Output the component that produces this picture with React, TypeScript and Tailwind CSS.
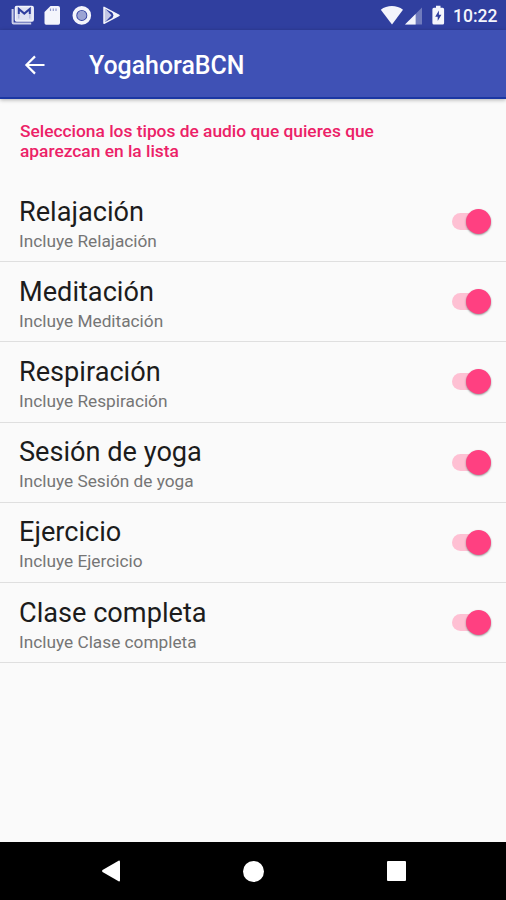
import React from 'react';

interface AudioType {
  name: string;
  summary: string;
}

const audioTypes: AudioType[] = [
  { name: 'Relajación', summary: 'Incluye Relajación' },
  { name: 'Meditación', summary: 'Incluye Meditación' },
  { name: 'Respiración', summary: 'Incluye Respiración' },
  { name: 'Sesión de yoga', summary: 'Incluye Sesión de yoga' },
  { name: 'Ejercicio', summary: 'Incluye Ejercicio' },
  { name: 'Clase completa', summary: 'Incluye Clase completa' },
];

const StatusBar: React.FC = () => (
  <div className="flex h-[30px] shrink-0 items-center justify-between bg-[#303f9f] pl-[10px] pr-[9px] text-[#f4f5fc]">
    <svg className="h-[30px] w-[112px]" viewBox="10 0 112 30" fill="none">
      {/* mail */}
      <path d="M12.6 9v13.5a1 1 0 0 0 1 1h17.600" stroke="currentColor" strokeWidth="2" strokeOpacity="0.8" />
      <rect x="15.400" y="6.500" width="17.800" height="14.500" rx="1.200" fill="#dfe2f3" stroke="currentColor" strokeWidth="1.400" />
      <path d="M18.800 14V9l5.500 4.600L29.800 9v5" stroke="#303f9f" strokeWidth="2" />
      <path d="M18.800 14v4.500M29.800 14v4.500" stroke="#aab1db" strokeWidth="1" />
      {/* sd card */}
      <path d="M50.500 6H58a2 2 0 0 1 2 2v15a1.700 1.700 0 0 1-1.700 1.700H46.200a1.700 1.700 0 0 1-1.700-1.700V12z" fill="currentColor" />
      <path d="M50.500 8.500v2.500M53.300 8.500v2.500M56 8.500v2.500" stroke="#8f97ca" strokeWidth="1.200" />
      {/* sync */}
      <circle cx="81.800" cy="15.400" r="7.400" stroke="currentColor" strokeWidth="3.800" />
      <circle cx="81.800" cy="15.400" r="4.600" fill="#9ba3d3" />
      {/* play store */}
      <path d="M104 7.300v16l15-8z" stroke="currentColor" strokeWidth="1.500" strokeLinejoin="round" />
      <path d="M104 7.300l7.500 8-7.500 8z" fill="currentColor" fillOpacity="0.75" />
      <path d="M112 11.500l7.500 3.900-7.500 3.900 1.500-3.900z" fill="currentColor" />
    </svg>
    <div className="flex items-center">
      <svg className="h-[30px] w-[66px]" viewBox="380 0 66 30">
        <path d="M380.800 9.700C387 4.800 396.800 4.800 403 9.700L392 24.500z" fill="currentColor" />
        <path d="M422 7.500v17h-17z" fill="currentColor" fillOpacity="0.33" />
        <path d="M415.600 13.900v10.600H405z" fill="currentColor" />
        <path d="M436 5.700h4.500v2h2.100a1.500 1.500 0 0 1 1.500 1.500v13.800a1.500 1.500 0 0 1-1.500 1.500h-8.700a1.500 1.500 0 0 1-1.500-1.500V9.200a1.500 1.500 0 0 1 1.500-1.500h2.100z" fill="currentColor" />
        <path d="M438.900 10.500l-3.700 6.300h2.500v4.200l3.700-6.300h-2.500z" fill="#303f9f" />
      </svg>
      <span className="ml-[7px] w-[44px] whitespace-nowrap pt-[3px] text-[17.500px] font-medium leading-none">10:22</span>
    </div>
  </div>
);

const AppBar: React.FC = () => (
  <header className="z-10 flex h-[69px] shrink-0 items-center border-b-2 border-[#1b37a3] bg-[#3f51b5] pl-[24px] pt-[2px] text-white shadow-[0_1px_4px_rgba(0,0,0,0.3)]">
    <svg className="size-[22px]" viewBox="0 0 22 22" fill="none" stroke="currentColor" strokeWidth="2.200">
      <path d="M20.500 11H3M11 2.400L2.400 11l8.600 8.600" />
    </svg>
    <h1 className="ml-[43px] pt-[3px] text-[24.900px] font-medium leading-none">YogahoraBCN</h1>
  </header>
);

const Toggle: React.FC = () => (
  <button type="button" role="switch" aria-checked="true" className="flex h-[26px] w-[39px] items-center justify-end rounded-full">
    <span className="-mr-[14px] h-[17px] w-[28px] rounded-full bg-[#fec0d3]" />
    <span className="size-[25px] rounded-full bg-[#ff4081] shadow-[0_1px_2px_rgba(0,0,0,0.4)]" />
  </button>
);

const AudioTypeRow: React.FC<{ item: AudioType }> = ({ item }) => (
  <li className="flex h-[80.200px] items-center justify-between border-b-[1.500px] border-[#dfdfdf] pl-[19px] pr-[15.500px]">
    <div className="pt-[3px]">
      <div className="text-[27.150px] leading-[32px] text-[#1c1c1c]">{item.name}</div>
      <div className="mt-[3px] text-[17.250px] leading-[20px] text-[#757575]">{item.summary}</div>
    </div>
    <Toggle />
  </li>
);

const NavigationBar: React.FC = () => (
  <nav className="flex h-[58px] shrink-0 items-center justify-between bg-black pl-[101px] pr-[100px] text-white">
    <svg className="h-[22px] w-[20px]" viewBox="0 0 20 22" fill="currentColor">
      <path d="M18 .5q1 0 1 1v19q0 1-1 1L1.500 12q-1-1 0-2z" />
    </svg>
    <span className="size-[21px] rounded-full bg-white" />
    <span className="size-[19.500px] rounded-[1px] bg-white" />
  </nav>
);

const App: React.FC = () => {
  return (
    <div className="flex h-[900px] w-[506px] flex-col overflow-hidden bg-[#fafafa] font-[Roboto,sans-serif]">
      <StatusBar />
      <AppBar />
      <main className="flex-1">
        <p className="h-[83px] pl-[20px] pt-[22px] text-[17.350px] font-medium leading-[20px] text-[#ec2167]">
          Selecciona los tipos de audio que quieres que
          <br />
          aparezcan en la lista
        </p>
        <ul>
          {audioTypes.map((item) => (
            <AudioTypeRow key={item.name} item={item} />
          ))}
        </ul>
      </main>
      <NavigationBar />
    </div>
  );
};

export default App;
